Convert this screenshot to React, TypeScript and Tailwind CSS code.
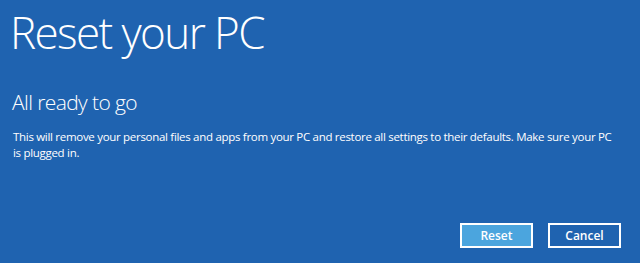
import React from "react";

export default function App() {
  return (
    <div
      className="w-[640px] h-[263px] bg-[#1f63b0] text-white flex flex-col overflow-hidden"
      style={{ fontFamily: '"Open Sans", "Noto Sans", sans-serif' }}
    >
      <div className="pl-[10px] pt-[2px] text-[44px] font-light leading-[60px] tracking-[-1.6px]">
        Reset your PC
      </div>
      <div className="pl-[12px] pt-[26px] text-[21px] font-light leading-[28px] tracking-[-0.6px]">
        All ready to go
      </div>
      <div className="pl-[13px] pt-[13px] pr-[20px] text-[11.5px] leading-[16px] tracking-[-0.3px]">
        This will remove your personal files and apps from your PC and restore all settings to their defaults. Make sure your PC is plugged in.
      </div>
      <div className="mt-auto mb-[15px] mr-[19px] flex justify-end gap-[15px]">
        <button className="w-[73px] h-[25px] border-2 border-white bg-[#4ba5de] text-[12px] font-semibold leading-none">
          Reset
        </button>
        <button className="w-[73px] h-[25px] border-2 border-white bg-[#1f63b0] text-[12px] font-semibold leading-none">
          Cancel
        </button>
      </div>
    </div>
  );
}
